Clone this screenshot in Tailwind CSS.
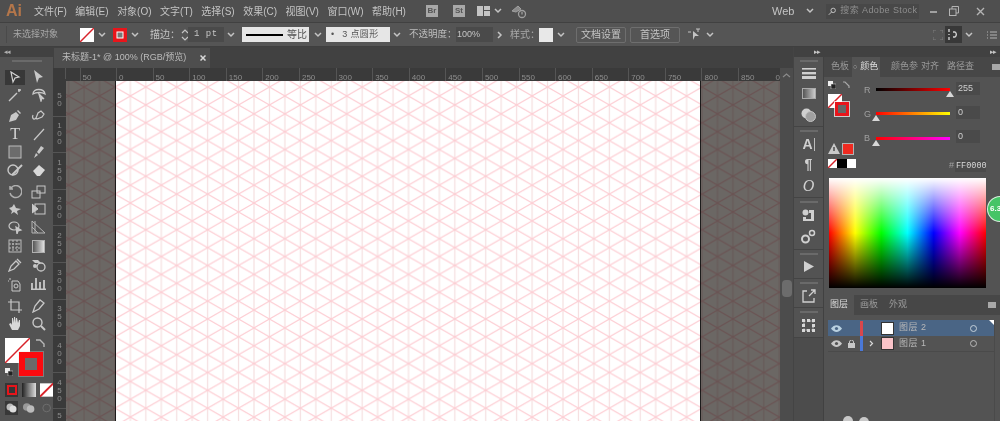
<!DOCTYPE html>
<html lang="zh-CN">
<head>
    <meta charset="UTF-8">
    <title>Adobe Illustrator</title>
    <script src="https://cdn.jsdelivr.net/npm/@tailwindcss/browser@4"></script>
</head>
<body class="bg-[#535353]">
<div class="w-[1000px] h-[421px] overflow-hidden relative flex flex-col font-['Liberation_Sans','Noto_Sans_CJK_SC',sans-serif] text-[10px] text-[#c4c4c4]">

    <!-- Menu bar -->
    <header class="h-[23px] shrink-0 flex items-center bg-[#4f4f4f] border-b border-[#414141]">
        <span class="ml-[6px] w-[28px] text-[16px] font-bold text-[#b4764a]">Ai</span>
        <nav class="flex gap-[8.5px] w-[392px] whitespace-nowrap">
            <span>文件(F)</span><span>编辑(E)</span><span>对象(O)</span><span>文字(T)</span><span>选择(S)</span><span>效果(C)</span><span>视图(V)</span><span>窗口(W)</span><span>帮助(H)</span>
        </nav>
        <span class="w-[12px] h-[12px] bg-[#a8a8a8] text-[#555] text-[8px] font-bold flex items-center justify-center">Br</span>
        <span class="ml-[15px] w-[12px] h-[12px] bg-[#a8a8a8] text-[#555] text-[8px] font-bold flex items-center justify-center">St</span>
        <svg class="ml-[12px]" width="13" height="10" viewBox="0 0 13 10" fill="#c4c4c4"><rect width="6" height="10"/><rect x="7" width="6" height="4"/><rect x="7" y="5" width="6" height="5"/></svg>
        <svg class="ml-[4px]" width="8" height="6" viewBox="0 0 8 6" fill="none" stroke="#c4c4c4" stroke-width="1.5"><path d="M1 1l3 3 3-3"/></svg>
        <svg class="ml-[9px]" width="16" height="16" viewBox="0 0 16 16" fill="none" stroke="#a0a0a0"><path d="M1 8l6-5 3 3-5 3z" fill="#8a8a8a"/><circle cx="11" cy="11" r="3.5" stroke-width="1.3"/><path d="M11 9v2.5" stroke-width="1.3"/></svg>
        <span class="ml-[245px] text-[11px]">Web</span>
        <svg class="ml-[12px]" width="8" height="6" viewBox="0 0 8 6" fill="none" stroke="#c4c4c4" stroke-width="1.5"><path d="M1 1l3 3 3-3"/></svg>
        <div class="ml-[12px] w-[93px] h-[15px] bg-[#484848] flex items-center px-[2px] gap-[3px] text-[#8e8e8e] text-[9px] tracking-[0.4px] whitespace-nowrap">
            <svg width="12" height="11" viewBox="0 0 12 11" fill="none" stroke="#c4c4c4" stroke-width="1.3"><circle cx="7" cy="4" r="3"/><path d="M5 6l-4 4"/></svg>
            <span>搜索 Adobe Stock</span>
        </div>
        <div class="ml-[10px] flex items-center gap-[11px]">
            <svg width="9" height="9" viewBox="0 0 9 9" stroke="#b4b4b4" stroke-width="1.6"><path d="M1 5h7"/></svg>
            <svg width="10" height="10" viewBox="0 0 10 10" fill="none" stroke="#b4b4b4"><rect x="0.5" y="3" width="6.5" height="6.5"/><path d="M3 3V.5h6.5V7H7"/></svg>
            <svg class="ml-[6px]" width="9" height="9" viewBox="0 0 9 9" stroke="#b4b4b4" stroke-width="1.4"><path d="M1 1l7 7M8 1l-7 7"/></svg>
        </div>
    </header>

    <!-- Control bar -->
    <div class="h-[24px] shrink-0 flex items-center bg-[#555555] border-b border-[#3f3f3f] whitespace-nowrap">
        <span class="ml-[6px] w-[74px] h-[17px] pl-[6px] flex items-center border-l border-[#4a4a4a] text-[#a8a8a8] text-[9px]">未选择对象</span>
        <svg width="14" height="14" viewBox="0 0 14 14"><rect width="14" height="14" fill="#fff"/><path d="M0 14L14 0" stroke="#d8232a" stroke-width="1.5"/></svg>
        <svg class="ml-[4px]" width="8" height="6" viewBox="0 0 8 6" fill="none" stroke="#c4c4c4" stroke-width="1.5"><path d="M1 1l3 3 3-3"/></svg>
        <svg class="ml-[7px]" width="14" height="14" viewBox="0 0 14 14"><rect width="14" height="14" fill="#e8151b"/><rect x="4" y="4" width="6" height="6" fill="#777" stroke="#fff"/></svg>
        <svg class="ml-[4px]" width="8" height="6" viewBox="0 0 8 6" fill="none" stroke="#c4c4c4" stroke-width="1.5"><path d="M1 1l3 3 3-3"/></svg>
        <span class="ml-[11px] w-[31px]">描边：</span>
        <svg width="8" height="14" viewBox="0 0 8 14" fill="none" stroke="#c4c4c4" stroke-width="1.2"><path d="M1 5l3-3 3 3M1 9l3 3 3-3"/></svg>
        <span class="ml-[-1px] pl-[6px] w-[36px] h-[15px] bg-[#4a4a4a] flex items-center tracking-[0.5px] font-['Liberation_Mono',monospace] text-[9px]">1 pt</span>
        <svg class="ml-[3px]" width="8" height="6" viewBox="0 0 8 6" fill="none" stroke="#c4c4c4" stroke-width="1.5"><path d="M1 1l3 3 3-3"/></svg>
        <div class="ml-[7px] w-[67px] h-[15px] bg-[#e6e6e6] flex items-center text-[#555] text-[10px]">
            <span class="ml-[4px] w-[37px] h-[2px] bg-black"></span><span class="ml-[4px]">等比</span>
        </div>
        <svg class="ml-[5px]" width="8" height="6" viewBox="0 0 8 6" fill="none" stroke="#c4c4c4" stroke-width="1.5"><path d="M1 1l3 3 3-3"/></svg>
        <div class="ml-[4px] w-[64px] h-[15px] bg-[#e6e6e6] flex items-center pl-[5px] text-[#555] text-[9px] gap-[8px]">
            <span>•</span><span class="tracking-[0.4px]">3 点圆形</span>
        </div>
        <svg class="ml-[3px]" width="8" height="6" viewBox="0 0 8 6" fill="none" stroke="#c4c4c4" stroke-width="1.5"><path d="M1 1l3 3 3-3"/></svg>
        <span class="ml-[8px] w-[47px] text-[#bcbcbc] text-[9.5px]">不透明度：</span>
        <span class="w-[37px] h-[15px] pl-[1px] bg-[#4a4a4a] flex items-center text-[9px]">100%</span>
        <svg class="ml-[4px]" width="6" height="8" viewBox="0 0 6 8" fill="none" stroke="#c4c4c4" stroke-width="1.5"><path d="M1 1l3 3-3 3"/></svg>
        <span class="ml-[7px] w-[28px] text-[#a8a8a8]">样式：</span>
        <span class="ml-[1px] w-[14px] h-[14px] bg-[#e8e8e8]"></span>
        <svg class="ml-[4px]" width="8" height="6" viewBox="0 0 8 6" fill="none" stroke="#c4c4c4" stroke-width="1.5"><path d="M1 1l3 3 3-3"/></svg>
        <span class="ml-[11px] w-[50px] h-[16px] border border-[#6e6e6e] rounded-[2px] flex items-center justify-center">文档设置</span>
        <span class="ml-[4px] w-[50px] h-[16px] border border-[#6e6e6e] rounded-[2px] flex items-center justify-center">首选项</span>
        <svg class="ml-[8px]" width="14" height="13" viewBox="0 0 14 13" fill="#c4c4c4"><path d="M5 3l6 5H7l-2 4z"/><path d="M0 4h3M8 1h4M10 1v3" stroke="#c4c4c4" fill="none"/></svg>
        <svg class="ml-[4px]" width="8" height="6" viewBox="0 0 8 6" fill="none" stroke="#c4c4c4" stroke-width="1.5"><path d="M1 1l3 3 3-3"/></svg>
        <svg class="ml-[219px]" width="10" height="10" viewBox="0 0 10 10" fill="none" stroke="#7c7c7c"><path d="M0 3V0h3M7 0h3v3M10 7v3H7M3 10H0V7"/></svg>
        <span class="ml-[2px] w-[17px] h-[17px] bg-[#383838] flex items-center justify-center">
            <svg width="11" height="11" viewBox="0 0 11 11" fill="none" stroke="#d0d0d0" stroke-width="1.4"><path d="M1 0v3M1 5v1M1 8v3M5 3h2a3 3 0 0 1 0 5H5"/></svg>
        </span>
        <svg class="ml-[3px]" width="8" height="6" viewBox="0 0 8 6" fill="none" stroke="#c4c4c4" stroke-width="1.5"><path d="M1 1l3 3 3-3"/></svg>
        <svg class="ml-[14px]" width="10" height="8" viewBox="0 0 10 8" stroke="#b4b4b4"><path d="M0 1h1M3 1h7M0 4h1M3 4h7M0 7h1M3 7h7"/></svg>
    </div>

    <main class="flex flex-1 min-h-0">
        <!-- Tools -->
        <aside class="w-[53px] shrink-0 bg-[#535353] flex flex-col">
            <div class="h-[10px] bg-[#414141] text-[7px] leading-[10px] pl-[4px] text-[#b0b0b0] tracking-[-1px]">◂◂</div>
            <div class="h-[11px] flex justify-center pt-[3px]"><span class="w-[30px] h-[2px] bg-[#6a6a6a]"></span></div>

            <div class="grid grid-cols-2 auto-rows-[18px] pl-[7px] pr-[6px] gap-x-[7px] justify-items-center items-center">
                <span class="w-[20px] h-[15px] bg-[#383838] flex items-center justify-center"><svg width="12" height="13" viewBox="0 0 12 13" fill="none" stroke="#d4d4d4" stroke-width="1.2"><path d="M2 1l8 5-4 1-2 4z"/></svg></span>
                <svg width="13" height="14" viewBox="0 0 13 14" fill="#c8c8c8"><path d="M2 0l9 7-4 1-2 5z"/></svg>
                <svg width="14" height="14" viewBox="0 0 14 14" fill="none" stroke="#c8c8c8" stroke-width="1.4"><path d="M1 13l8-8M11 1v3M10 2h3"/></svg>
                <svg width="15" height="14" viewBox="0 0 15 14" fill="none" stroke="#c8c8c8" stroke-width="1.3"><path d="M2 6c0-6 11-6 12 0-3-2-9-2-12 0z"/><path d="M8 6l2 7 1-3 2 1z" fill="#c8c8c8"/></svg>
            </div>
            <div class="grid grid-cols-2 auto-rows-[18px] mt-[3px] pl-[7px] pr-[6px] gap-x-[7px] justify-items-center items-center">
                <svg width="14" height="14" viewBox="0 0 14 14" fill="#c8c8c8"><path d="M1 13l2-7 5-3 3 3-3 5zM9 2l1-1 3 3-1 1z"/></svg>
                <svg width="15" height="14" viewBox="0 0 15 14" fill="none" stroke="#c8c8c8" stroke-width="1.2"><path d="M5 9l2-5 3-2 3 3-2 3-5 2zM5 9c-3 3-4-1-3-3"/></svg>
                <span class="text-[16px] leading-none font-['Liberation_Serif',serif] text-[#d4d4d4]">T</span>
                <svg width="12" height="13" viewBox="0 0 12 13" stroke="#c8c8c8" stroke-width="1.2"><path d="M1 12L11 1"/></svg>
                <svg width="14" height="14" viewBox="0 0 14 14"><rect x="1" y="1" width="12" height="12" fill="#6c6c6c" stroke="#bcbcbc"/></svg>
                <svg width="13" height="14" viewBox="0 0 13 14" fill="#c8c8c8"><path d="M9 1l3 2-5 6-2-2zM4 8l2 2-4 3z"/></svg>
                <svg width="16" height="14" viewBox="0 0 16 14" fill="none" stroke="#c8c8c8" stroke-width="1.4"><circle cx="6" cy="7" r="5"/><path d="M5 12l10-10" stroke-width="2"/></svg>
                <svg width="14" height="14" viewBox="0 0 14 14" fill="#d8d8d8"><path d="M1 8l6-6 6 5-5 6H5z"/></svg>
            </div>
            <div class="grid grid-cols-2 auto-rows-[17.5px] mt-[4px] pl-[7px] pr-[6px] gap-x-[7px] justify-items-center items-center">
                <svg width="14" height="14" viewBox="0 0 14 14" fill="none" stroke="#b0b0b0" stroke-width="1.5"><path d="M3 3a6 6 0 1 1-1 5M2 1v3h3"/></svg>
                <svg width="15" height="14" viewBox="0 0 15 14" fill="none" stroke="#c8c8c8"><rect x="1" y="6" width="8" height="7"/><rect x="6" y="1" width="8" height="7"/></svg>
                <svg width="14" height="14" viewBox="0 0 14 14" fill="#c8c8c8"><path d="M1 6l3-1 2-3 2 4 5 1-4 2 1 4-4-3-3 2 1-3z"/></svg>
                <svg width="14" height="14" viewBox="0 0 14 14" fill="none" stroke="#c8c8c8"><rect x="3" y="2" width="10" height="10"/><path d="M0 2l6 5-6 4z" fill="#c8c8c8"/></svg>
                <svg width="15" height="14" viewBox="0 0 15 14" fill="none" stroke="#c8c8c8" stroke-width="1.2"><ellipse cx="6" cy="6" rx="5" ry="4"/><path d="M8 7l5 3-3 1-1 3z" fill="#c8c8c8"/></svg>
                <svg width="15" height="14" viewBox="0 0 15 14" fill="none" stroke="#b4b4b4"><path d="M1 1l13 12H1z"/><path d="M1 7l6 6M4 1v12"/></svg>
            </div>
            <div class="grid grid-cols-2 auto-rows-[19px] mt-[1px] pl-[7px] pr-[6px] gap-x-[7px] justify-items-center items-center">
                <svg width="14" height="14" viewBox="0 0 14 14" fill="none" stroke="#bcbcbc"><rect x="1" y="1" width="12" height="12"/><path d="M1 5h12M1 9h12M5 1v12M9 1v12" stroke-dasharray="2 1"/></svg>
                <span class="w-[13px] h-[13px] border border-[#b0b0b0] bg-[linear-gradient(to_right,#555,#e0e0e0)]"></span>
                <svg width="14" height="14" viewBox="0 0 14 14" fill="none" stroke="#c8c8c8" stroke-width="1.3"><path d="M1 13l2-5 5-5 3 3-5 5zM9 1l4 4"/></svg>
                <svg width="15" height="13" viewBox="0 0 15 13" fill="#c8c8c8"><path d="M1 1h6l3 3H4z"/><circle cx="10" cy="8" r="4" fill="none" stroke="#c8c8c8" stroke-width="1.3"/><circle cx="4" cy="7" r="2"/></svg>
                <svg width="14" height="15" viewBox="0 0 14 15" fill="none" stroke="#c8c8c8"><path d="M1 2h2M0 4h1M4 4h6l2 3v7H4z"/><circle cx="8" cy="9" r="2"/></svg>
                <svg width="15" height="12" viewBox="0 0 15 12" stroke="#c8c8c8" stroke-width="1.6"><path d="M1 12V5M5 12V0M9 12V4M13 12V2M0 11.5h15" stroke-width="1.8"/></svg>
            </div>
            <div class="grid grid-cols-2 auto-rows-[18px] mt-[3px] pl-[7px] pr-[6px] gap-x-[7px] justify-items-center items-center">
                <svg width="14" height="14" viewBox="0 0 14 14" fill="none" stroke="#c8c8c8" stroke-width="1.2"><path d="M3 0v11h11M0 3h11v11"/></svg>
                <svg width="14" height="14" viewBox="0 0 14 14" fill="none" stroke="#c8c8c8" stroke-width="1.3"><path d="M1 13l2-6 5-6 4 3-5 6z"/></svg>
                <svg width="15" height="15" viewBox="0 0 15 15" fill="#d8d8d8"><path d="M4 14L1 8l2-1 1 2V2h1l1 5V1h1l1 6V2h1l1 5 1-3h1v6l-2 4z"/></svg>
                <svg width="14" height="14" viewBox="0 0 14 14" fill="none" stroke="#c8c8c8" stroke-width="1.4"><circle cx="5.5" cy="5.5" r="4.5"/><path d="M9 9l4 4" stroke-width="2"/></svg>
            </div>

            <!-- Fill and stroke -->
            <div class="relative h-[44px] mt-[5px] ml-[5px]">
                <svg class="absolute left-0 top-0" width="25" height="25" viewBox="0 0 25 25"><rect width="25" height="25" fill="#fff"/><path d="M0 25L25 0" stroke="#d8232a" stroke-width="1.5"/></svg>
                <span class="absolute left-[14px] top-[14px] w-[24px] h-[24px] border-[6px] border-[#fb0a0f] bg-[#6a6a6a] outline outline-[#e0e0e0]/30"></span>
                <svg class="absolute left-[30px] top-[1px]" width="10" height="9" viewBox="0 0 10 9" fill="none" stroke="#b8b8b8" stroke-width="1.4"><path d="M1 1h4l4 4v3"/></svg>
                <svg class="absolute left-[0px] top-[30px]" width="8" height="8" viewBox="0 0 8 8"><rect x="0" y="0" width="5" height="5" fill="#eee"/><rect x="3" y="3" width="5" height="5" fill="#222" stroke="#ddd" stroke-width=".5"/></svg>
            </div>
            <div class="flex mt-[1px] pl-[5px] gap-[4px]">
                <span class="w-[14px] h-[14px] bg-[#363636] flex items-center justify-center"><span class="w-[10px] h-[10px] border-[2px] border-[#e8151b]"></span></span>
                <span class="w-[14px] h-[14px] bg-[linear-gradient(to_right,#222,#ddd)]"></span>
                <svg width="14" height="14" viewBox="0 0 14 14"><rect width="14" height="14" fill="#fff"/><path d="M0 14L14 0" stroke="#d8232a" stroke-width="2"/></svg>
            </div>
            <div class="flex mt-[4px] pl-[5px] gap-[4px] items-center">
                <span class="w-[14px] h-[14px] bg-[#383838] flex items-center justify-center"><svg width="11" height="10" viewBox="0 0 11 10"><circle cx="4" cy="4" r="3.5" fill="#bbb"/><circle cx="7" cy="6" r="3.5" fill="#ddd"/></svg></span>
                <svg width="14" height="12" viewBox="0 0 14 12"><circle cx="5" cy="5" r="4" fill="#999"/><circle cx="9" cy="7" r="4" fill="#bbb"/></svg>
                <svg width="14" height="12" viewBox="0 0 14 12" fill="none" stroke="#6f6f6f"><circle cx="7" cy="6" r="4"/></svg>
            </div>
        </aside>

        <!-- Document -->
        <section class="w-[740px] shrink-0 flex flex-col min-w-0">
            <div class="h-[21px] shrink-0 bg-[#414141] flex items-end pl-[1px]">
                <div class="w-[156px] h-[20px] bg-[#4e4e4e] flex items-center pl-[8px] text-[#bcbcbc] whitespace-nowrap">
                    <span class="w-[138px] text-[9px]">未标题-1* @ 100% (RGB/预览)</span>
                    <svg width="6" height="6" viewBox="0 0 6 6" stroke="#d8d8d8" stroke-width="1.5"><path d="M.5.5l5 5M5.5.5l-5 5"/></svg>
                </div>
            </div>
            <!-- Horizontal ruler -->
            <div class="h-[13px] shrink-0 flex bg-[#3a3a3a] text-[8px] text-[#8e8e8e] leading-none">
                <div class="w-[13px] shrink-0 border-r border-[#555]"></div>
                <div class="w-[13.6px] shrink-0"></div>
                <div class="w-[36.4px] shrink-0 border-l border-[#555] pl-[2px] pt-[6px]">50</div>
                <div class="flex flex-1 overflow-hidden">
                    <div class="w-[36.6px] shrink-0 border-l border-[#555] pl-[2px] pt-[6px]">0</div>
                    <div class="w-[36.6px] shrink-0 border-l border-[#555] pl-[2px] pt-[6px]">50</div>
                    <div class="w-[36.6px] shrink-0 border-l border-[#555] pl-[2px] pt-[6px]">100</div>
                    <div class="w-[36.6px] shrink-0 border-l border-[#555] pl-[2px] pt-[6px]">150</div>
                    <div class="w-[36.6px] shrink-0 border-l border-[#555] pl-[2px] pt-[6px]">200</div>
                    <div class="w-[36.6px] shrink-0 border-l border-[#555] pl-[2px] pt-[6px]">250</div>
                    <div class="w-[36.6px] shrink-0 border-l border-[#555] pl-[2px] pt-[6px]">300</div>
                    <div class="w-[36.6px] shrink-0 border-l border-[#555] pl-[2px] pt-[6px]">350</div>
                    <div class="w-[36.6px] shrink-0 border-l border-[#555] pl-[2px] pt-[6px]">400</div>
                    <div class="w-[36.6px] shrink-0 border-l border-[#555] pl-[2px] pt-[6px]">450</div>
                    <div class="w-[36.6px] shrink-0 border-l border-[#555] pl-[2px] pt-[6px]">500</div>
                    <div class="w-[36.6px] shrink-0 border-l border-[#555] pl-[2px] pt-[6px]">550</div>
                    <div class="w-[36.6px] shrink-0 border-l border-[#555] pl-[2px] pt-[6px]">600</div>
                    <div class="w-[36.6px] shrink-0 border-l border-[#555] pl-[2px] pt-[6px]">650</div>
                    <div class="w-[36.6px] shrink-0 border-l border-[#555] pl-[2px] pt-[6px]">700</div>
                    <div class="w-[36.6px] shrink-0 border-l border-[#555] pl-[2px] pt-[6px]">750</div>
                    <div class="w-[36.6px] shrink-0 border-l border-[#555] pl-[2px] pt-[6px]">800</div>
                    <div class="w-[36.6px] shrink-0 border-l border-[#555] pl-[2px] pt-[6px]">850</div>
                    <div class="w-[5.2px] shrink-0 pt-[6px] text-right">0</div>
                </div>
                <div class="w-[13px] shrink-0 bg-[#4c4c4c]"></div>
            </div>
            <div class="flex flex-1 min-h-0">
                <!-- Vertical ruler -->
                <div class="w-[13px] shrink-0 -mt-[2px] bg-[#3a3a3a] text-[8px] leading-[8px] text-[#8e8e8e] flex flex-col items-stretch overflow-hidden">
                    <div class="h-[36.6px] shrink-0 flex flex-col items-center justify-center pt-[6px]"><span>5</span><span>0</span></div>
                    <div class="h-[36.6px] shrink-0 border-t border-[#555] flex flex-col items-center justify-center"><span>1</span><span>0</span><span>0</span></div>
                    <div class="h-[36.6px] shrink-0 border-t border-[#555] flex flex-col items-center justify-center"><span>1</span><span>5</span><span>0</span></div>
                    <div class="h-[36.6px] shrink-0 border-t border-[#555] flex flex-col items-center justify-center"><span>2</span><span>0</span><span>0</span></div>
                    <div class="h-[36.6px] shrink-0 border-t border-[#555] flex flex-col items-center justify-center"><span>2</span><span>5</span><span>0</span></div>
                    <div class="h-[36.6px] shrink-0 border-t border-[#555] flex flex-col items-center justify-center"><span>3</span><span>0</span><span>0</span></div>
                    <div class="h-[36.6px] shrink-0 border-t border-[#555] flex flex-col items-center justify-center"><span>3</span><span>5</span><span>0</span></div>
                    <div class="h-[36.6px] shrink-0 border-t border-[#555] flex flex-col items-center justify-center"><span>4</span><span>0</span><span>0</span></div>
                    <div class="h-[36.6px] shrink-0 border-t border-[#555] flex flex-col items-center justify-center"><span>4</span><span>5</span><span>0</span></div>
                    <div class="h-[36.6px] shrink-0 border-t border-[#555] flex flex-col items-center pt-[3px]"><span>5</span></div>
                </div>
                <!-- Canvas -->
                <div class="w-[714px] shrink-0 relative flex bg-[#6b6764] overflow-hidden">
                    <div class="w-[50px] shrink-0 border-r border-[#1c1c1c]"></div>
                    <div class="w-[585px] shrink-0 bg-white border-r border-[#1c1c1c]"></div>
                    <svg class="absolute inset-0 mix-blend-multiply blur-[0.4px]" width="714" height="340">
                        <defs>
                            <pattern id="isoGrid" patternUnits="userSpaceOnUse" x="64.4" y="15" width="30.9" height="17.84">
                                <path d="M0 0V17.84M15.45 0V17.84M30.9 0V17.84" stroke="#f5dfe0" stroke-width="1.2"/>
                                <path d="M0 0L30.9 17.84M0 17.84L30.9 0" stroke="#fdcdd3" stroke-width="1.1"/>
                            </pattern>
                        </defs>
                        <rect width="714" height="340" fill="url(#isoGrid)"/>
                    </svg>
                </div>
                <!-- Scrollbar -->
                <div class="w-[13px] shrink-0 bg-[#4c4c4c] flex flex-col items-center -mt-[13px]">
                    <svg class="mt-[5px]" width="9" height="5" viewBox="0 0 9 5" fill="none" stroke="#8a8a8a" stroke-width="1.2"><path d="M1 4l3.5-3L8 4"/></svg>
                    <span class="mt-[202px] w-[10px] h-[17px] rounded-[4px] bg-[#6c6c6c]"></span>
                </div>
            </div>
        </section>

        <!-- Panel dock -->
        <aside class="w-[30px] shrink-0 flex flex-col bg-[#4c4c4c] border-l border-[#444]">
            <div class="h-[10px] shrink-0 bg-[#414141] text-[7px] leading-[10px] text-right pr-[3px] text-[#c4c4c4] tracking-[-1px]">▸▸</div>
            <div class="bg-[#535353] border-b border-[#444] h-[70px] flex flex-col items-center pt-[3px]">
                <span class="w-[18px] h-[2px] bg-[#6a6a6a]"></span>
                <svg class="mt-[6px]" width="14" height="11" viewBox="0 0 14 11" fill="#d0d0d0"><rect width="14" height="1.6"/><rect y="4" width="14" height="2.4"/><rect y="8" width="14" height="3"/></svg>
                <span class="mt-[9px] w-[14px] h-[11px] border border-[#aaa] bg-[linear-gradient(to_right,#555,#ccc)]"></span>
                <svg class="mt-[9px]" width="15" height="14" viewBox="0 0 15 14"><circle cx="5.5" cy="5.5" r="5" fill="#d0d0d0"/><circle cx="9.5" cy="8.5" r="5" fill="#a0a0a0" stroke="#c4c4c4"/></svg>
            </div>
            <div class="bg-[#535353] border-b border-[#444] h-[71px] flex flex-col items-center pt-[3px]">
                <span class="w-[18px] h-[2px] bg-[#6a6a6a]"></span>
                <span class="mt-[4px] text-[14px] leading-[17px] font-bold text-[#d0d0d0] flex items-center">A<span class="w-[1px] h-[13px] bg-[#bbb] ml-[1px]"></span></span>
                <span class="mt-[3px] text-[14px] leading-[17px] text-[#d0d0d0] font-bold">¶</span>
                <span class="mt-[4px] text-[16px] leading-[18px] italic font-['Liberation_Serif',serif] text-[#d0d0d0]">O</span>
            </div>
            <div class="bg-[#535353] border-b border-[#444] h-[52px] flex flex-col items-center pt-[3px]">
                <span class="w-[18px] h-[2px] bg-[#6a6a6a]"></span>
                <svg class="mt-[6px]" width="13" height="13" viewBox="0 0 13 13" fill="#d0d0d0"><circle cx="3.5" cy="3.5" r="3"/><path d="M7 1h5v11H1V8h3v2h5V4H7z"/></svg>
                <svg class="mt-[7px]" width="15" height="15" viewBox="0 0 15 15" fill="none" stroke="#d0d0d0"><circle cx="4.5" cy="10" r="3.5" stroke-width="2"/><circle cx="11" cy="4" r="2.5" stroke-width="1.5"/></svg>
            </div>
            <div class="bg-[#535353] border-b border-[#444] h-[29px] flex flex-col items-center pt-[3px]">
                <span class="w-[18px] h-[2px] bg-[#6a6a6a]"></span>
                <svg class="mt-[6px]" width="11" height="11" viewBox="0 0 11 11" fill="#d0d0d0"><path d="M1 0l10 5.5L1 11z"/></svg>
            </div>
            <div class="bg-[#535353] border-b border-[#444] h-[29px] flex flex-col items-center pt-[3px]">
                <span class="w-[18px] h-[2px] bg-[#6a6a6a]"></span>
                <svg class="mt-[5px]" width="14" height="14" viewBox="0 0 14 14" fill="none" stroke="#d0d0d0" stroke-width="1.3"><path d="M5 2H1v11h11V9M7 7l6-6M9 1h4v4"/></svg>
            </div>
            <div class="bg-[#535353] border-b border-[#444] h-[30px] flex flex-col items-center pt-[3px]">
                <span class="w-[18px] h-[2px] bg-[#6a6a6a]"></span>
                <svg class="mt-[6px]" width="13" height="13" viewBox="0 0 13 13" fill="#d8d8d8"><path d="M2 2h9v9H2z" fill="none" stroke="#d0d0d0" stroke-dasharray="1.5 1.5"/><rect width="3" height="3"/><rect x="10" width="3" height="3"/><rect y="10" width="3" height="3"/><rect x="10" y="10" width="3" height="3"/><rect x="5" y="0" width="3" height="3"/><rect x="5" y="10" width="3" height="3"/><rect y="5" width="3" height="3"/><rect x="10" y="5" width="3" height="3"/></svg>
            </div>
        </aside>

        <!-- Right panels -->
        <aside class="flex-1 min-w-0 flex flex-col bg-[#535353] border-l border-[#414141]">
            <div class="h-[10px] shrink-0 bg-[#414141] text-[7px] leading-[10px] text-right pr-[4px] text-[#c4c4c4] tracking-[-1px]">▸▸</div>
            <div class="h-[20px] shrink-0 flex items-center bg-[#474747] text-[#9a9a9a] whitespace-nowrap">
                <span class="ml-[7px] text-[9px]">色板</span>
                <span class="ml-[3px] w-[28px] h-[20px] bg-[#535353] flex items-center text-[#dcdcdc] text-[9px] gap-[3px] pl-[1px]"><span class="text-[7px] text-[#b0b0b0]">○</span>颜色</span>
                <span class="ml-[11px] text-[9px] w-[30px]">颜色参</span>
                <span class="text-[9px] w-[26px]">对齐</span>
                <span class="text-[9px]">路径查</span>
                <svg class="ml-[18px]" width="8" height="6" viewBox="0 0 8 6" fill="#a8a8a8"><rect width="8" height="6"/></svg>
            </div>
            <!-- Colour panel -->
            <div class="h-[98px] shrink-0 flex relative">
                <div class="w-[40px] shrink-0 pl-[4px] pt-[4px]">
                    <div class="flex items-center gap-[6px]">
                        <svg width="8" height="8" viewBox="0 0 8 8"><rect width="5" height="5" fill="#eee"/><rect x="3" y="3" width="5" height="5" fill="#222" stroke="#ddd" stroke-width=".5"/></svg>
                        <svg width="8" height="8" viewBox="0 0 8 8" fill="none" stroke="#aaa" stroke-width="1.2"><path d="M1 1h2l4 4v2"/></svg>
                    </div>
                    <div class="relative h-[30px] mt-[4px]">
                        <svg class="absolute left-0 top-[1px]" width="14" height="14" viewBox="0 0 14 14"><rect width="14" height="14" fill="#fff"/><path d="M0 14L14 0" stroke="#d8232a" stroke-width="1.5"/></svg>
                        <span class="absolute left-[7px] top-[9px] w-[14px] h-[14px] border-[3px] border-[#e8151b] outline outline-white/70 bg-[#666]"></span>
                    </div>
                    <div class="flex items-center gap-[3px] mt-[20px]">
                        <svg width="12" height="11" viewBox="0 0 12 11"><path d="M6 0l6 11H0z" fill="#c8c8c8"/><path d="M6 4v4" stroke="#444" stroke-width="1.4"/></svg>
                        <span class="w-[10px] h-[10px] bg-[#ef2a20] outline outline-[#ddd]/70"></span>
                    </div>
                    <div class="flex mt-[5px]">
                        <svg width="9" height="9" viewBox="0 0 9 9"><rect width="9" height="9" fill="#fff"/><path d="M0 9L9 0" stroke="#d8232a" stroke-width="1.4"/></svg>
                        <span class="w-[10px] h-[9px] bg-black"></span>
                        <span class="w-[9px] h-[9px] bg-white"></span>
                    </div>
                </div>
                <div class="flex-1 pt-[7px] text-[#a0a0a0] text-[9px]">
                    <div class="h-[24px] flex items-start">
                        <span class="w-[12px] leading-[12px]">R</span>
                        <div class="w-[74px] relative mt-[4px]">
                            <div class="h-[3px] bg-[linear-gradient(to_right,#000,#f00)]"></div>
                            <span class="absolute right-[-4px] top-[3px] w-0 h-0 border-x-[4px] border-x-transparent border-b-[6px] border-b-[#d8d8d8]"></span>
                        </div>
                        <span class="ml-[6px] -mt-[2px] w-[24px] h-[13px] pl-[2px] bg-[#4a4a4a] text-[#d0d0d0] leading-[13px]">255</span>
                    </div>
                    <div class="h-[24px] flex items-start">
                        <span class="w-[12px] leading-[12px]">G</span>
                        <div class="w-[74px] relative mt-[4px]">
                            <div class="h-[3px] bg-[linear-gradient(to_right,#f00,#ff0)]"></div>
                            <span class="absolute left-[-4px] top-[3px] w-0 h-0 border-x-[4px] border-x-transparent border-b-[6px] border-b-[#d8d8d8]"></span>
                        </div>
                        <span class="ml-[6px] -mt-[2px] w-[24px] h-[13px] pl-[2px] bg-[#4a4a4a] text-[#d0d0d0] leading-[13px]">0</span>
                    </div>
                    <div class="h-[24px] flex items-start">
                        <span class="w-[12px] leading-[12px]">B</span>
                        <div class="w-[74px] relative mt-[5px]">
                            <div class="h-[3px] bg-[linear-gradient(to_right,#f00,#f0f)]"></div>
                            <span class="absolute left-[-4px] top-[3px] w-0 h-0 border-x-[4px] border-x-transparent border-b-[6px] border-b-[#d8d8d8]"></span>
                        </div>
                        <span class="ml-[6px] -mt-[2px] w-[24px] h-[13px] pl-[2px] bg-[#4a4a4a] text-[#d0d0d0] leading-[13px]">0</span>
                    </div>
                    <div class="flex items-center mt-[3px] ml-[85px]">
                        <span class="w-[6px]">#</span>
                        <span class="w-[31px] h-[12px] bg-[#4a4a4a] text-[#d8d8d8] pl-[1px] leading-[12px] font-['Liberation_Mono',monospace] text-[8.5px]">FF0000</span>
                    </div>
                </div>
            </div>
            <!-- Spectrum -->
            <div class="h-[110px] mt-[3px] shrink-0 ml-[5px] w-[157px] bg-[linear-gradient(to_bottom,#fff,#fff0_50%,#0000_50%,#000),linear-gradient(to_right,#f00,#ff0,#0f0,#0ff,#00f,#f0f,#f00)]"></div>
            <div class="mt-[7px] h-[20px] shrink-0 flex items-center bg-[#474747] text-[#9a9a9a] text-[9px]">
                <span class="w-[30px] h-[20px] bg-[#535353] text-[#dcdcdc] flex items-center justify-center">图层</span>
                <span class="ml-[6px]">画板</span>
                <span class="ml-[11px]">外观</span>
                <svg class="ml-[81px]" width="8" height="6" viewBox="0 0 8 6" fill="#a8a8a8"><rect width="8" height="6"/></svg>
            </div>
            <!-- Layers -->
            <div class="mt-[5px] mr-[5px] ml-[4px] flex-1 border-r border-[#4a4a4a] text-[9px] text-[#b8b8b8]">
                <div class="relative h-[16px] flex items-center bg-[#4a6585] tracking-[0.5px]">
                    <svg class="ml-[3px]" width="11" height="7" viewBox="0 0 11 7"><path d="M0 3.5C3-1 8-1 11 3.5 8 8 3 8 0 3.5z" fill="#b8d0e0"/><circle cx="5.5" cy="3.5" r="1.6" fill="#4a6585"/></svg>
                    <span class="ml-[18px] w-[3px] h-[15px] bg-[#d8474c]"></span>
                    <span class="ml-[18px] w-[13px] h-[13px] bg-white border border-[#333]"></span>
                    <span class="ml-[5px] w-[71px]">图层 2</span>
                    <span class="w-[7px] h-[7px] rounded-full border border-[#c4d0da]"></span>
                    <span class="absolute right-0 top-0 w-0 h-0 border-t-[5px] border-t-white border-l-[5px] border-l-transparent"></span>
                </div>
                <div class="h-[16px] flex items-center border-b border-[#4a4a4a] tracking-[0.5px]">
                    <svg class="ml-[3px]" width="11" height="7" viewBox="0 0 11 7"><path d="M0 3.5C3-1 8-1 11 3.5 8 8 3 8 0 3.5z" fill="#c8c8c8"/><circle cx="5.5" cy="3.5" r="1.6" fill="#535353"/></svg>
                    <svg class="ml-[6px]" width="7" height="8" viewBox="0 0 7 8"><rect y="3" width="7" height="5" fill="#c8c8c8"/><path d="M1.5 3V2a2 2 0 0 1 4 0v1" fill="none" stroke="#c8c8c8"/></svg>
                    <span class="ml-[5px] w-[3px] h-[15px] bg-[#4a78d8]"></span>
                    <svg class="ml-[6px]" width="5" height="7" viewBox="0 0 5 7" fill="none" stroke="#d8d8d8" stroke-width="1.2"><path d="M1 1l2.5 2.5L1 6"/></svg>
                    <span class="ml-[7px] w-[13px] h-[13px] bg-[#f9c3c8] border border-[#333]"></span>
                    <span class="ml-[5px] w-[71px]">图层 1</span>
                    <span class="w-[7px] h-[7px] rounded-full border border-[#b8b8b8]"></span>
                </div>
            </div>
        </aside>
    </main>

    <!-- Overlays not part of the app -->
    <span class="absolute left-[987px] top-[196px] w-[26px] h-[26px] rounded-full bg-[#45c466] border border-white/80 text-white text-[8px] font-bold leading-[24px] pl-[2px]">6.3</span>
    <span class="absolute left-[843px] top-[416px] w-[10px] h-[10px] rounded-full bg-[#c8c8c8]"></span>
    <span class="absolute left-[859px] top-[417px] w-[10px] h-[10px] rounded-full bg-[#c8c8c8]"></span>
</div>
</body>
</html>
